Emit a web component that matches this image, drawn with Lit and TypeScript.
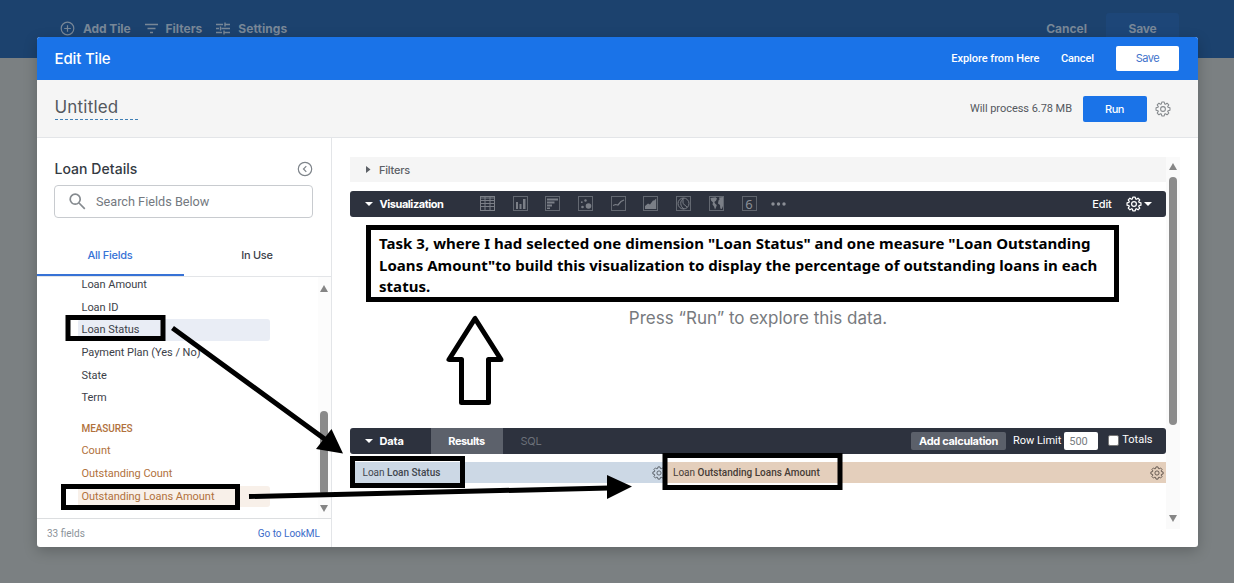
import { LitElement, html, css, svg } from "lit";
import { customElement } from "lit/decorators.js";
import { classMap } from "lit/directives/class-map.js";

const gear = (size: number, width = 1.6) => {
  const pts: string[] = [];
  for (let i = 0; i < 8; i++) {
    const a = (i * Math.PI) / 4;
    const at = (r: number, d: number) =>
      `${(12 + r * Math.sin(a + d)).toFixed(2)} ${(12 - r * Math.cos(a + d)).toFixed(2)}`;
    pts.push(at(7.9, -0.32), at(10.6, -0.17), at(10.6, 0.17), at(7.9, 0.32));
  }
  return html`<svg width=${size} height=${size} viewBox="0 0 24 24" fill="none"
    stroke="currentColor" stroke-width=${width} stroke-linejoin="round">
    <path d="M${pts.join("L")}Z" /><circle cx="12" cy="12" r="3.6" />
  </svg>`;
};

const frame = svg`<rect x=".5" y=".5" width="14" height="14" fill="none" stroke="currentColor" opacity=".7"/>`;

const chartIcons = [
  svg`<rect x=".5" y=".5" width="14" height="14" fill="none" stroke="currentColor"/>
    <path d="M1 2h13M1 4.5h13M1 7.5h13M1 10.5h13M5 1v13M10 1v13" stroke="currentColor" fill="none"/>`,
  svg`${frame}<path d="M3 6h2v7H3zM6.5 8h2v5h-2zM10 3h2.5v10H10z" fill="currentColor"/>`,
  svg`${frame}<path d="M2 2.5h11v2H2zM2 5.5h7.5v2H2zM2 8.5h5v2H2zM2 11.5h3v1.5H2z" fill="currentColor"/>`,
  svg`${frame}<g fill="currentColor"><circle cx="10.5" cy="10" r="2.8"/><circle cx="4.5" cy="11" r="1.3"/><circle cx="7.5" cy="4.5" r="1.2"/><circle cx="3.8" cy="6.2" r=".9"/></g>`,
  svg`${frame}<path d="M2 9.5l2.5-1 2.500 .5 3-3.500 3-1.500" fill="none" stroke="currentColor" stroke-width="1.2"/>`,
  svg`${frame}<path d="M2 13V10l3-2.5 2 1 3-4h1.200l2-2V13z" fill="currentColor"/>`,
  svg`${frame}<circle cx="7.500" cy="7.500" r="5.500" fill="none" stroke="currentColor"/><path d="M7 2v5.500l4.300 3.800M7.500 2.500c-4 2-3.500 8 .5 10.500" fill="none" stroke="currentColor"/>`,
  svg`${frame}<path d="M1.500 2l5-.7 1.500 1.200-1 2.200-1.700 1.200L6.500 8l1.300 1-.8 2.500-1 2-1-3L3.500 8.500 4 6.500 2 4.500zM10 1.500l4-.5v9l-1.200 3-1.500-.5-.3-3.500-2-1.500.5-3 1-1z" fill="currentColor"/>`,
];

const dimensions = [
  { name: "Loan Amount" },
  { name: "Loan ID" },
  { name: "Loan Status", on: true },
  { name: "Payment Plan (Yes / No)" },
  { name: "State" },
  { name: "Term" },
];
const measures = [
  { name: "Count" },
  { name: "Outstanding Count" },
  { name: "Outstanding Loans Amount", on: true },
];

@customElement("dashboard-bar")
class DashboardBar extends LitElement {
  static styles = css`
    :host { display: block; height: 58px; background: #1c426e; color: #788797;
      font: 700 12px/16px Inter, sans-serif; }
    .row { display: flex; align-items: center; height: 31px; padding: 13px 55px 0 60px; }
    svg { display: block; }
    .add { margin: 0 14px 0 8px; letter-spacing: -0.1px; }
    .filters { margin: 0 14px 0 8px; }
    .settings { margin-left: 8px; letter-spacing: 0.07px; }
    .cancel { margin-left: auto; margin-right: 19px; }
    .save { width: 73px; height: 31px; line-height: 31px; text-align: center; background: #1d4678;
      border-radius: 3px; letter-spacing: -0.18px; }
  `;
  render() {
    return html`<div class="row">
      <svg width="15" height="15" viewBox="0 0 15 15" fill="none" stroke="currentColor" stroke-width="1.2"><circle cx="7.500" cy="7.500" r="6.300"/><path d="M7.500 4.200v6.600M4.200 7.500h6.600"/></svg>
      <span class="add">Add Tile</span>
      <svg width="13" height="11" viewBox="0 0 13 11" stroke="currentColor" stroke-width="1.400"><path d="M0 1.500h13M2.500 5.500h8M5 9.500h3"/></svg>
      <span class="filters">Filters</span>
      <svg width="14" height="13" viewBox="0 0 14 13" fill="none" stroke="currentColor" stroke-width="1.400"><path d="M0 2.500h7M9 2.500h5M9 .5v4M0 6.500h3M5.500 6.500H14M4.500 4.500v4M0 10.500h6M8 10.500h6M8 8.500v4"/></svg>
      <span class="settings">Settings</span>
      <span class="cancel">Cancel</span>
      <span class="save">Save</span>
    </div>`;
  }
}

@customElement("field-picker")
class FieldPicker extends LitElement {
  static styles = css`
    :host { display: flex; flex-direction: column; width: 294px; border-right: 1px solid #e3e5e8;
      box-sizing: content-box; font-family: Roboto, sans-serif; color: #3c4149; }
    svg { display: block; }
    .head { display: flex; justify-content: space-between; align-items: center;
      padding: 22px 18px 0 18px; height: 17px; font: 500 14px/17px Inter, sans-serif; color: #343a42; letter-spacing: .05px; }
    .head svg { color: #7f858b; }
    .search { display: flex; align-items: center; gap: 10px; height: 31px; margin: 8px 18px 0 17.500px;
      padding-left: 14px; border: 1px solid #c8cbcf; border-radius: 4px; font-size: 12.700px; color: #74797f; }
    .tabs { display: grid; grid-template-columns: 1fr 1fr; height: 58px; border-bottom: 1px solid #e3e5e8;
      font: 500 11px/15px Inter, sans-serif; text-align: center; }
    .tab { padding-top: 30px; box-sizing: border-box; height: 58px; }
    .tab.active { color: #3772d6; border-bottom: 2px solid #3772d6; letter-spacing: -.25px; }
    .tab.other { letter-spacing: -.3px; }
    .body { display: flex; flex: 1; min-height: 0; }
    .list { flex: 1; font-size: 11px; letter-spacing: -.04px; overflow: hidden; padding-left: 41px; }
    .list .field:first-child { margin-top: -3px; }
    .field { height: 21.700px; line-height: 21.700px; margin-bottom: 1px; width: 188px; padding-left: 4px; box-sizing: content-box; border-radius: 3px; }
    .field.on { background: #e9edf5; }
    .label { font-weight: 500; font-size: 10px; line-height: 14px; color: #b1713c; margin: 13px 0 4px 4px; letter-spacing: -.08px; }
    .measure { color: #b1713c; }
    .measure.on { background: #f8f0e9; }
    .scroll { width: 12px; display: flex; flex-direction: column; align-items: center; background: #fcfcfc; padding: 8px 1px 6px 0; color: #858585; }
    .thumb { width: 8px; height: 84px; border-radius: 4px; background: #8b8b8b; margin: auto 0 10px; }
    .foot { display: flex; justify-content: space-between; align-items: center; height: 28px; padding: 0 10.500px 0 10.500px;
      border-top: 1px solid #dcdee0; font-size: 10px; color: #8c9399; }
    .link { color: #3c6cc9; }
  `;
  render() {
    return html`
      <div class="head">Loan Details
        <svg width="16" height="16" viewBox="0 0 16 16" fill="none" stroke="currentColor" stroke-width="1.200"><circle cx="8" cy="8" r="6.700"/><path d="M9.300 5.200L6.500 8l2.800 2.800"/></svg>
      </div>
      <div class="search">
        <svg width="17" height="17" viewBox="0 0 17 17" fill="none" stroke="#858a8f" stroke-width="1.700"><circle cx="6.200" cy="6.200" r="5"/><path d="M10 10l5.800 5.800"/></svg>
        Search Fields Below
      </div>
      <div class="tabs"><div class="tab active">All Fields</div><div class="tab other">In Use</div></div>
      <div class="body">
        <div class="list">
          ${dimensions.map((f) => html`<div class=${classMap({ field: true, on: !!f.on })}>${f.name}</div>`)}
          <div class="label">MEASURES</div>
          ${measures.map((f) => html`<div class=${classMap({ field: true, measure: true, on: !!f.on })}>${f.name}</div>`)}
        </div>
        <div class="scroll">
          <svg width="8" height="7" viewBox="0 0 8 7"><path d="M4 0l4 7H0z" fill="currentColor"/></svg>
          <div class="thumb"></div>
          <svg width="8" height="7" viewBox="0 0 8 7"><path d="M4 7l4-7H0z" fill="currentColor"/></svg>
        </div>
      </div>
      <div class="foot"><span>33 fields</span><span class="link">Go to LookML</span></div>`;
  }
}

@customElement("explore-pane")
class ExplorePane extends LitElement {
  static styles = css`
    :host { display: flex; flex: 1; min-width: 0; padding: 19px 18px 18px 18px; font-family: Inter, sans-serif; }
    svg { display: block; }
    .content { width: 816px; display: flex; flex-direction: column; }
    .bar { display: flex; align-items: center; box-sizing: border-box; flex: none; font-size: 11px; }
    .filters { height: 25px; background: #f5f5f5; color: #5c6066; font-weight: 500; padding-left: 16px; letter-spacing: -.2px; }
    .filters svg { margin-right: 8.500px; }
    .dark { height: 25.500px; background: #2d323e; color: #fff; border-radius: 3px; }
    .viz { margin-top: 9px; padding: 0 14px 0 15px; }
    .title { font-weight: 700; margin-left: 7px; letter-spacing: -.45px; }
    .icons { display: flex; gap: 17.700px; margin-left: 36.500px; color: #7b7f87; }
    .six { width: 13px; height: 13px; border: 1px solid #5f646d; font: 400 13px/14px "Noto Sans", sans-serif; text-align: center; color: #8b8f96; }
    .more { align-self: center; margin-left: -3px; }
    .edit { margin: 0 14px 0 auto; font-weight: 500; letter-spacing: -.2px; }
    .caret { margin-left: 2px; }
    .empty { flex: 1; text-align: center; font-size: 17px; line-height: 22px; color: #777a7e; padding: 90px 0 0 1px; }
    .data { padding: 0 13px 0 15px; }
    .data .title { letter-spacing: -.15px; width: 45px; margin-right: 6px; }
    .tab { align-self: stretch; line-height: 26px; width: 72px; text-align: center; }
    .results { background: #5c616b; font-weight: 700; letter-spacing: -.5px; }
    .sql { width: auto; margin-left: 18px; color: #6b7079; letter-spacing: -.2px; }
    .calc { margin-left: auto; width: 95px; height: 18px; line-height: 18px; background: #5b606a; border-radius: 2px; text-align: center; font-weight: 700; letter-spacing: -.31px; }
    .limit { margin-left: 7px; font-family: Roboto, sans-serif; letter-spacing: -.04px; }
    .num { margin: 0 10px 0 3px; width: 29px; padding-left: 5px; height: 18px; line-height: 19px; background: #fff; color: #777b80; font-family: Roboto, sans-serif; border-radius: 2px; }
    .check { width: 9px; height: 9px; margin-top: -1px; border: 1px solid #777; background: #fff; border-radius: 2px; }
    .totals { margin-left: 3px; margin-top: -2px; font-family: Roboto, sans-serif; }
    .cols { display: grid; grid-template-columns: 313.500px 1fr; height: 21px; margin: 8.500px 0 46px; font: 500 10px/21px Roboto, sans-serif; color: #41464d; }
    .col { display: flex; align-items: center; justify-content: space-between; background: #ccd8e5; padding: 0 0 0 13px; }
    .col svg { margin-right: -3px; }
    .col.m { background: #e4cfbc; padding: 0 2px 0 10px; color: #463c36; }
    .col.m svg { margin-right: 0; }
    .soft { font-weight: 400; }
    .scroll { width: 14px; background: #fafafa; display: flex; flex-direction: column; align-items: center; box-sizing: border-box; padding: 6px 0 7px; color: #858585; }
    .thumb { width: 8px; height: 248px; border-radius: 4px; background: #8b8b8b; margin: 7px 0 auto; }
  `;
  render() {
    const down = html`<svg width="8" height="4" viewBox="0 0 8 4"><path d="M0 0h8L4 4z" fill="currentColor"/></svg>`;
    return html`
      <div class="content">
        <div class="bar filters"><svg width="5" height="7" viewBox="0 0 5 7"><path d="M0 0l4.500 3.500L0 7z" fill="currentColor"/></svg>Filters</div>
        <div class="bar dark viz">
          ${down}<span class="title">Visualization</span>
          <div class="icons">
            ${chartIcons.map((i) => html`<svg width="15" height="15" viewBox="0 0 15 15">${i}</svg>`)}
            <span class="six">6</span>
            <svg class="more" width="15" height="4" viewBox="0 0 15 4" fill="#8b8f96"><circle cx="2" cy="2" r="1.700"/><circle cx="7.500" cy="2" r="1.700"/><circle cx="13" cy="2" r="1.700"/></svg>
          </div>
          <span class="edit">Edit</span>${gear(16, 1.8)}<span class="caret">${down}</span>
        </div>
        <div class="empty">Press “Run” to explore this data.</div>
        <div class="bar dark data">
          ${down}<span class="title">Data</span>
          <span class="tab results">Results</span><span class="tab sql">SQL</span>
          <span class="calc">Add calculation</span><span class="limit">Row Limit</span><span class="num">500</span>
          <span class="check"></span><span class="totals">Totals</span>
        </div>
        <div class="cols">
          <div class="col"><span><span class="soft">Loan</span> Loan Status</span>${gear(14, 1.3)}</div>
          <div class="col m"><span><span class="soft">Loan</span> Outstanding Loans Amount</span>${gear(14, 1.3)}</div>
        </div>
      </div>
      <div class="scroll">
        <svg width="8" height="7" viewBox="0 0 8 7"><path d="M4 0l4 7H0z" fill="currentColor"/></svg>
        <div class="thumb"></div>
        <svg width="8" height="7" viewBox="0 0 8 7"><path d="M4 7l4-7H0z" fill="currentColor"/></svg>
      </div>`;
  }
}

@customElement("note-layer")
class NoteLayer extends LitElement {
  static styles = css`
    :host { position: absolute; inset: 0; pointer-events: none; }
    .marks { position: absolute; inset: 0; }
    .note { position: absolute; left: 366px; top: 225px; width: 753px; height: 77px; box-sizing: border-box;
      border: 5px solid #000; background: #fff; padding: 3px 0 0 8px; white-space: nowrap;
      font: 700 15px/21.500px "Noto Sans", sans-serif; letter-spacing: .035px; color: #000; }
  `;
  render() {
    return html`
      <svg class="marks" width="1234" height="583" viewBox="0 0 1234 583" fill="none" stroke="#000" stroke-width="5">
        <rect x="68" y="317.500" width="95" height="21"/>
        <rect x="63.500" y="486.500" width="174" height="21"/>
        <rect x="352.500" y="458.500" width="110" height="27"/>
        <rect x="665" y="455.500" width="175" height="32"/>
        <path d="M172.500 328L326 440M249 496.500l360-8.500"/>
        <path d="M343 453.500L331.500 429 316 449zM632 486.500L607 475v24z" fill="#000" stroke="none"/>
        <path d="M475 318.500L449 359.500H461.500V402.500H488.500V359.500H501Z" fill="#fff" stroke-linejoin="round"/>
      </svg>
      <div class="note">Task 3, where I had selected one dimension "Loan Status" and one measure "Loan Outstanding<br>Loans Amount"to build this visualization to display the percentage of outstanding loans in each<br>status.</div>`;
  }
}

@customElement("app-root")
class AppRoot extends LitElement {
  static styles = css`
    :host { display: block; position: relative; width: 1234px; height: 583px; overflow: hidden; background: #7b8082; }
    .modal { position: absolute; left: 36.500px; top: 37px; width: 1161px; height: 510px; display: flex; flex-direction: column;
      background: #fff; border-radius: 3px; overflow: hidden; box-shadow: 0 4px 14px rgba(0,0,0,.22); }
    .header { display: flex; align-items: center; height: 43px; padding: 0 18.500px 0 18px; background: #1a73e8; color: #fff;
      font: 500 11px/14px Roboto, sans-serif; }
    .heading { font: 500 15px/20px Inter, sans-serif; letter-spacing: -.15px; margin-right: auto; }
    .explore { letter-spacing: -.05px; margin-right: 21.500px; }
    .cancel { letter-spacing: -.1px; margin-right: 22px; }
    .save { width: 63px; height: 25px; line-height: 25px; background: #fff; color: #3f73cc; border-radius: 2px; text-align: center;
      font-family: Inter, sans-serif; font-weight: 400; letter-spacing: -.5px; }
    .sub { display: flex; align-items: center; height: 57px; padding: 0 27px 0 18px; background: #f5f5f5; border-bottom: 1px solid #e3e5e8; }
    .name { width: 83px; font: 400 17px/22px Inter, sans-serif; letter-spacing: .2px; color: #54585e;
      border-bottom: 1px dashed #3f7fb5; margin-right: auto; padding-bottom: 1px; margin-top: -1px; }
    .cost { font: 400 11px/14px Roboto, sans-serif; letter-spacing: -.04px; color: #54585e; margin-right: 10.500px; }
    .run { width: 64px; height: 26px; background: #1a73e8; color: #fff; border-radius: 2px; text-align: center;
      font: 500 11px/26px Inter, sans-serif; letter-spacing: -.45px; margin-right: 8px; }
    .cog { color: #85898d; }
    svg { display: block; }
    .main { display: flex; flex: 1; min-height: 0; }
  `;
  render() {
    return html`
      <dashboard-bar></dashboard-bar>
      <div class="modal">
        <div class="header"><span class="heading">Edit Tile</span><span class="explore">Explore from Here</span><span class="cancel">Cancel</span><span class="save">Save</span></div>
        <div class="sub"><span class="name">Untitled</span><span class="cost">Will process 6.78 MB</span><span class="run">Run</span><span class="cog">${gear(16)}</span></div>
        <div class="main"><field-picker></field-picker><explore-pane></explore-pane></div>
      </div>
      <note-layer></note-layer>`;
  }
}
